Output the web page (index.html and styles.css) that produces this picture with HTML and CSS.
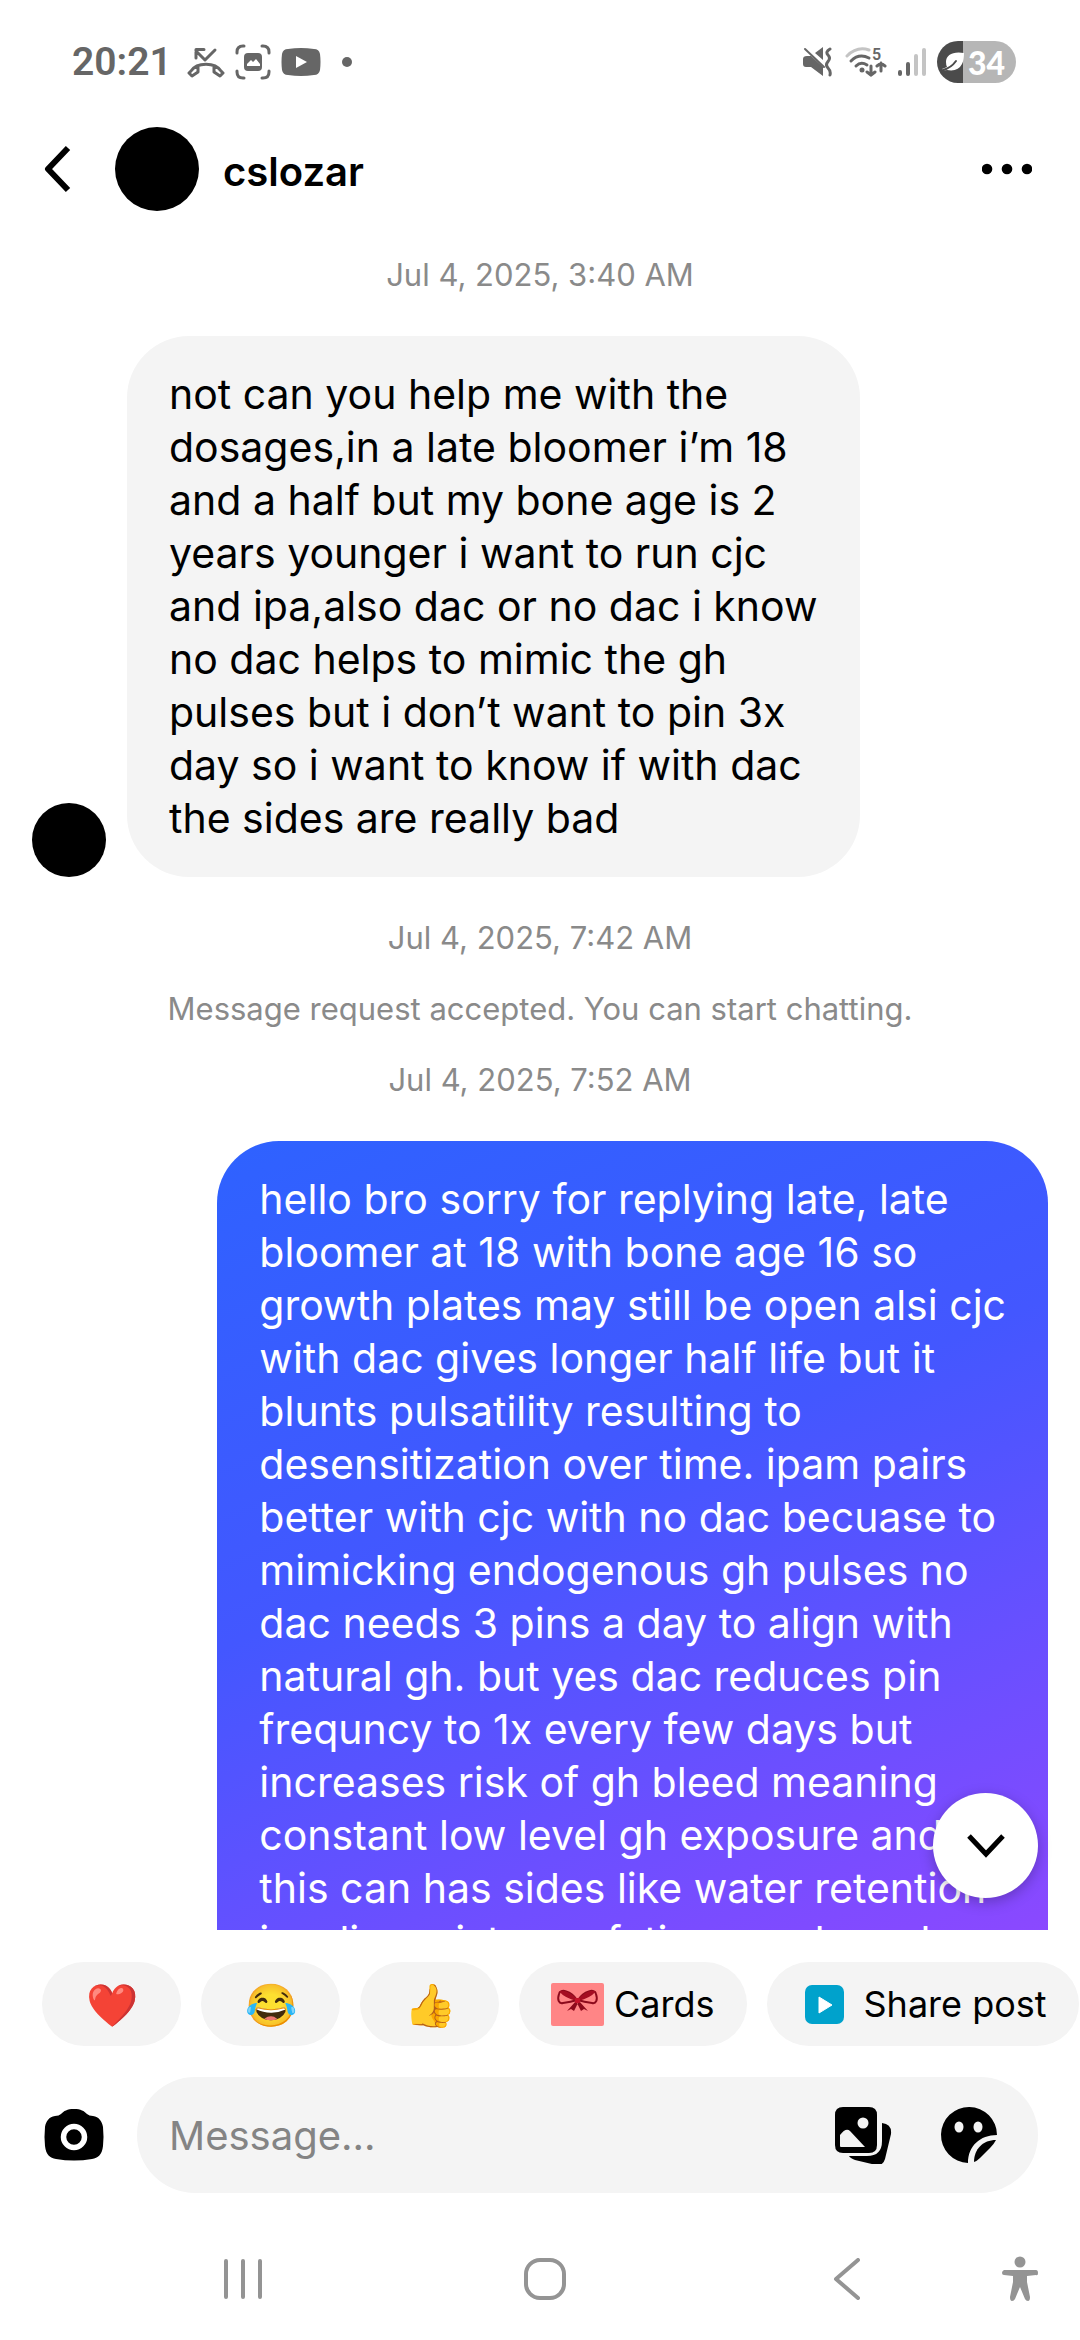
FILE: index.html
```
<!DOCTYPE html>
<html lang="en">
  <head>
    <meta charset="UTF-8" />
    <meta name="viewport" content="width=device-width, initial-scale=1" />
    <title>cslozar - Messages</title>
    <link rel="stylesheet" href="styles.css">
  </head>
  <body>
    <!-- Status bar -->
    <div class="status-bar">
      <span class="clock">20:21</span>
      <div class="status-icons">
        <!-- missed call -->
        <svg width="38" height="36" viewBox="0 0 38 36" fill="none" stroke="#666" stroke-width="3" stroke-linecap="round" stroke-linejoin="round">
          <path d="M28 6 18 16 9 7M9 14V5.500H17" />
          <path d="M4 27C10 18 28 18 34 27L36 29 33 32 27 28V22M4 27 2 29 5 32 11 28V22" />
        </svg>
        <!-- screen capture -->
        <svg width="36" height="36" viewBox="0 0 36 36">
          <g fill="none" stroke="#666" stroke-width="3" stroke-linecap="round">
            <path d="M2 9V8Q2 2 8 2H9M27 2H28Q34 2 34 8V9M34 27V28Q34 34 28 34H27M9 34H8Q2 34 2 28V27" />
          </g>
          <rect x="9" y="9" width="18" height="18" rx="4" fill="#666" />
          <path d="M12 20 16 16 18 18 21 15 25 20V22H12Z" fill="#fff" />
        </svg>
        <!-- video -->
        <svg width="40" height="28" viewBox="0 0 40 28">
          <path d="M7 1Q20-1 33 1Q38 1 39 6Q40 14 39 22Q38 27 33 27Q20 29 7 27Q2 27 1 22Q0 14 1 6Q2 1 7 1Z" fill="#666" />
          <path d="M15 8 26 14 15 20Z" fill="#fff" />
        </svg>
      </div>
      <span class="status-dot"></span>

      <div class="status-right">
        <!-- muted / vibrate -->
        <svg width="32" height="30" viewBox="0 0 32 30">
          <path d="M5 9H9L21 20V29L9 20H4Q1 20 1 17V12Q1 9 5 9ZM21 0V13L13 6Z" fill="#666" />
          <path d="M3 2 22 20" stroke="#666" stroke-width="2" stroke-linecap="round" />
          <path d="M28 2Q23 5 26 8T26 14.500T26 21T28 28" fill="none" stroke="#666" stroke-width="3" stroke-linecap="round" />
        </svg>
        <!-- wifi -->
        <svg width="42" height="32" viewBox="0 0 42 32">
          <g fill="none" stroke-width="3" stroke-linecap="round">
            <path d="M2 10Q12 0 24 4" stroke="#c4c4c4" />
            <path d="M6 15Q14 7 24 12" stroke="#666" />
            <path d="M11 20Q16 15 22 19" stroke="#666" />
            <path d="M26 20V29M22 26 26 29 30 26M36 25V17M32 20 36 17 40 20" stroke="#666" />
          </g>
          <circle cx="17" cy="24" r="2.500" fill="#666" />
          <text x="27" y="14" class="wifi-band">5</text>
        </svg>
        <!-- signal -->
        <svg width="28" height="30" viewBox="0 0 28 30" stroke-width="4" stroke-linecap="round">
          <path d="M2 25V27M10 17V27" stroke="#666" />
          <path d="M18 9V27M26 3V27" stroke="#c4c4c4" />
        </svg>
        <!-- battery -->
        <div class="battery">
          <svg width="24" height="22" viewBox="0 0 24 22">
            <path d="M23 2C12 0 5 4 5 11Q5 14 6 16L1 18Q2 20 6 19Q17 21 21 13Q23 9 23 2Z" fill="#fff" />
            <path d="M2 19Q10 17 15 10" fill="none" stroke="#4b4b4b" stroke-width="2" stroke-linecap="round" />
          </svg>
          <span>34</span>
        </div>
      </div>
    </div>

    <!-- Chat header -->
    <header class="chat-header">
      <button class="icon-button" aria-label="Back">
        <svg width="28" height="48" viewBox="0 0 28 48" fill="none" stroke="#000" stroke-width="6">
          <path d="M25 3 5 24 25 45" stroke-linejoin="round" />
        </svg>
      </button>
      <span class="avatar"></span>
      <h1 class="name">cslozar</h1>
      <button class="icon-button more" aria-label="More options">
        <svg width="50" height="12" viewBox="0 0 50 12">
          <circle cx="5" cy="6" r="5.300" />
          <circle cx="25" cy="6" r="5.300" />
          <circle cx="45" cy="6" r="5.300" />
        </svg>
      </button>
    </header>

    <!-- Conversation -->
    <main class="chat">
      <p class="notice">Jul 4, 2025, 3:40 AM</p>

      <div class="row received">
        <span class="avatar small"></span>
        <p class="bubble">
          not can you help me with the<br>
          dosages,in a late bloomer i’m 18<br>
          and a half but my bone age is 2<br>
          years younger i want to run cjc<br>
          and ipa,also dac or no dac i know<br>
          no dac helps to mimic the gh<br>
          pulses but i don’t want to pin 3x<br>
          day so i want to know if with dac<br>
          the sides are really bad
        </p>
      </div>

      <div class="notices">
        <p class="notice">Jul 4, 2025, 7:42 AM</p>
        <p class="notice">Message request accepted. You can start chatting.</p>
        <p class="notice">Jul 4, 2025, 7:52 AM</p>
      </div>

      <div class="row sent">
        <p class="bubble">
          hello bro sorry for replying late, late<br>
          bloomer at 18 with bone age 16 so<br>
          growth plates may still be open alsi cjc<br>
          with dac gives longer half life but it<br>
          blunts pulsatility resulting to<br>
          desensitization over time. ipam pairs<br>
          better with cjc with no dac becuase to<br>
          mimicking endogenous gh pulses no<br>
          dac needs 3 pins a day to align with<br>
          natural gh. but yes dac reduces pin<br>
          frequncy to 1x every few days but<br>
          increases risk of gh bleed meaning<br>
          constant low level gh exposure and<br>
          this can has sides like water retention<br>
          insulin resistance fatigue and numb
        </p>
      </div>

      <button class="scroll-down" aria-label="Scroll to latest">
        <svg width="40" height="24" viewBox="0 0 40 24" fill="none" stroke="#000" stroke-width="5">
          <path d="M3 2 20 20 37 2" />
        </svg>
      </button>
    </main>

    <!-- Quick replies -->
    <div class="chips">
      <button class="chip emoji" aria-label="Send heart">❤️</button>
      <button class="chip emoji" aria-label="Send laughing face">😂</button>
      <button class="chip emoji" aria-label="Send thumbs up">👍</button>
      <button class="chip cards">
        <svg width="53" height="43" viewBox="0 0 53 43">
          <rect width="53" height="43" rx="2" fill="#ff8586" />
          <path d="M26 17C20 8 9 5 8 11C6 17 8 21 12 20Q20 19 26 17ZM27 17C33 8 44 5 45 11C47 17 45 21 41 20Q33 19 27 17Z" fill="#ff8586" stroke="#8c0a1c" stroke-width="2" />
          <path d="M10 9Q15 7 26 17Q14 14 10 9ZM43 9Q38 7 27 17Q39 14 43 9Z" fill="#a50d22" stroke="#a50d22" stroke-width="2" />
          <path d="M25 18 16 28 20 26 23 28 27 20ZM28 18 37 28 33 26 30 28 26 20Z" fill="#8c0a1c" />
          <rect x="24" y="15" width="5" height="5" rx="1" fill="#c4122a" />
        </svg>
        Cards
      </button>
      <button class="chip share">
        <svg width="39" height="39" viewBox="0 0 39 39">
          <rect width="39" height="39" rx="7" fill="#00a2cc" />
          <path d="M14 12 27 20 14 28Z" fill="#fff" stroke="#fff" stroke-linejoin="round" />
        </svg>
        Share post
      </button>
    </div>

    <!-- Message input -->
    <form class="composer">
      <button type="button" class="icon-button" aria-label="Camera">
        <svg width="60" height="54" viewBox="0 0 60 54">
          <path d="M30 1C37 1 40 3 43 6Q45 8 49 8C55 9 58 13 59 19Q60 29 59 38C58 47 54 50 48 51Q30 54 12 51C6 50 2 47 1 38Q0 29 1 19C2 13 5 9 11 8Q15 8 17 6C20 3 23 1 30 1Z" />
          <circle cx="30" cy="29" r="10.500" fill="none" stroke="#fff" stroke-width="5.500" />
        </svg>
      </button>
      <div class="field">
        <input type="text" placeholder="Message..." aria-label="Message">
        <button type="button" class="icon-button" aria-label="Gallery">
          <svg width="58" height="58" viewBox="0 0 58 58">
            <path d="M8 1H34Q42 1 42 9V39Q42 47 34 47H8Q0 47 0 39V9Q0 1 8 1Z" />
            <circle cx="28" cy="17" r="5.500" fill="#f4f4f4" />
            <path d="M5 40V29Q11 21 15 25L30 41H6Q5 41 5 40Z" fill="#f4f4f4" />
            <path d="M47 20Q57 21 56 31L50 56Q48 63 41 62L20 57Q15 55 14 53H32Q47 53 47 38Z" transform="translate(0 -3)" />
          </svg>
        </button>
        <button type="button" class="icon-button" aria-label="Stickers">
          <svg width="58" height="58" viewBox="0 0 58 58">
            <path d="M28 57A28 28 0 1 1 57 29C40 29 28 40 28 57Z" />
            <ellipse cx="19" cy="21" rx="4.500" ry="5.500" fill="#f4f4f4" />
            <ellipse cx="38" cy="21" rx="4.500" ry="5.500" fill="#f4f4f4" />
            <path d="M34 56C34 43 43 34 56 34Q54 38 50 42L40 52Q37 55 34 56Z" />
          </svg>
        </button>
      </div>
    </form>

    <!-- System navigation -->
    <nav class="nav-bar">
      <button class="icon-button" aria-label="Recent apps">
        <svg width="38" height="42" viewBox="0 0 38 42" stroke="#949494" stroke-width="4" stroke-linecap="round">
          <path d="M2 3V39M19 3V39M36 3V39" />
        </svg>
      </button>
      <button class="icon-button" aria-label="Home">
        <svg width="42" height="42" viewBox="0 0 42 42" fill="none" stroke="#949494" stroke-width="4">
          <rect x="2" y="2" width="38" height="38" rx="14" />
        </svg>
      </button>
      <button class="icon-button" aria-label="Back">
        <svg width="28" height="42" viewBox="0 0 28 42" fill="none" stroke="#949494" stroke-width="4" stroke-linecap="round" stroke-linejoin="round">
          <path d="M25 2 3 21 25 40" />
        </svg>
      </button>
      <button class="icon-button" aria-label="Accessibility">
        <svg width="38" height="46" viewBox="0 0 38 46" fill="#949494">
          <circle cx="19" cy="6" r="5.500" />
          <path d="M3 14H35Q37 14 37 17T35 19L26 20V26L29 41Q29 45 27 45T24 43L19 31 14 43Q13 45 11 45T9 41L12 26V20L3 19Q1 19 1 17T3 14Z" />
        </svg>
      </button>
    </nav>
  </body>
</html>
```
FILE: styles.css
```
* {
  box-sizing: border-box;
}

body {
  display: flex;
  flex-direction: column;
  height: 100vh;
  margin: 0;
  overflow: hidden;
  font-family: Inter, "Noto Sans", sans-serif;
  color: #000;
  background: #fff;
}

h1,
p {
  margin: 0;
}

svg {
  display: block;
  flex: none;
}

button {
  padding: 0;
  border: none;
  font-family: inherit;
  color: inherit;
  cursor: pointer;
}

.icon-button {
  display: flex;
  align-items: center;
  justify-content: center;
  background: none;
}

/* Status bar */
.status-bar {
  display: flex;
  align-items: center;
  height: 124px;
  padding: 0 64px 0 72px;
  color: #666;
}

.clock {
  width: 98px;
  font-family: Roboto, sans-serif;
  font-size: 39px;
  font-weight: 600;
}

.status-icons {
  display: flex;
  align-items: center;
  gap: 10px;
  margin-left: 17px;
}

.status-dot {
  width: 10px;
  height: 10px;
  margin-left: 21px;
  border-radius: 50%;
  background: #666;
}

.status-right {
  display: flex;
  align-items: center;
  gap: 11px;
  margin-left: auto;
}

.wifi-band {
  font-family: Roboto, sans-serif;
  font-size: 16px;
  font-weight: 600;
  fill: #666;
}

.battery {
  display: flex;
  align-items: center;
  gap: 3px;
  width: 79px;
  height: 42px;
  padding-left: 4px;
  border-radius: 21px;
  font-family: Lato, sans-serif;
  font-size: 32px;
  font-weight: 900;
  color: #fff;
  background: linear-gradient(to right, #4b4b4b 33%, #b6b6b6 33%);
}

/* Chat header */
.chat-header {
  display: flex;
  align-items: center;
  height: 90px;
  padding: 0 48px 0 43px;
}

.avatar {
  flex: none;
  width: 84px;
  height: 84px;
  margin-left: 44px;
  border-radius: 50%;
  background: #000;
}

.avatar.small {
  width: 74px;
  height: 74px;
  margin-left: 0;
}

.name {
  margin-left: 24px;
  padding-top: 4px;
  font-size: 40px;
  font-weight: 600;
}

.more {
  margin-left: auto;
}

/* Conversation */
.chat {
  position: relative;
  display: flex;
  flex: 1;
  flex-direction: column;
  gap: 41px;
  min-height: 0;
  padding: 41px 32px 0;
  overflow: hidden;
}

.notices {
  display: flex;
  flex-direction: column;
  gap: 31px;
}

.notice {
  font-size: 31px;
  line-height: 40px;
  text-align: center;
  color: #8a8a8a;
}

.row {
  display: flex;
  align-items: flex-end;
  gap: 21px;
}

.row.sent {
  justify-content: flex-end;
}

.bubble {
  padding: 32px 42px;
  border-radius: 62px;
  font-size: 41px;
  line-height: 53px;
  white-space: nowrap;
  background: #f4f4f4;
}

.sent .bubble {
  color: #fff;
  background: linear-gradient(157deg, #2e62ff, #4357ff 42%, #9347ff);
}

.scroll-down {
  position: absolute;
  right: 42px;
  bottom: 32px;
  display: flex;
  align-items: center;
  justify-content: center;
  width: 105px;
  height: 105px;
  border-radius: 50%;
  background: #fff;
  box-shadow: 0 4px 14px rgba(0, 0, 0, 0.25);
}

/* Quick replies */
.chips {
  display: flex;
  gap: 20px;
  padding: 32px 0 31px 42px;
  overflow: hidden;
}

.chip {
  display: flex;
  flex: none;
  align-items: center;
  justify-content: center;
  height: 84px;
  padding: 0 32px;
  border-radius: 42px;
  font-size: 36px;
  background: #f4f4f4;
}

.chip.emoji {
  width: 139px;
  padding: 0;
  font-size: 42px;
}

.chip.cards {
  gap: 10px;
}

.chip.share {
  gap: 20px;
  padding-left: 38px;
}

/* Message input */
.composer {
  display: flex;
  align-items: center;
  gap: 33px;
  padding: 0 42px 0 44px;
}

.field {
  display: flex;
  flex: 1;
  align-items: center;
  gap: 47px;
  min-width: 0;
  height: 116px;
  padding: 0 40px 0 32px;
  border-radius: 58px;
  background: #f4f4f4;
}

.field input {
  flex: 1;
  min-width: 0;
  padding: 0;
  border: none;
  outline: none;
  font-family: inherit;
  font-size: 40px;
  background: none;
}

.field input::placeholder {
  color: #848484;
}

/* System navigation */
.nav-bar {
  display: grid;
  grid-template-columns: repeat(3, 1fr) 44px;
  align-items: center;
  height: 147px;
  padding: 24px 38px 0 92px;
}
```
